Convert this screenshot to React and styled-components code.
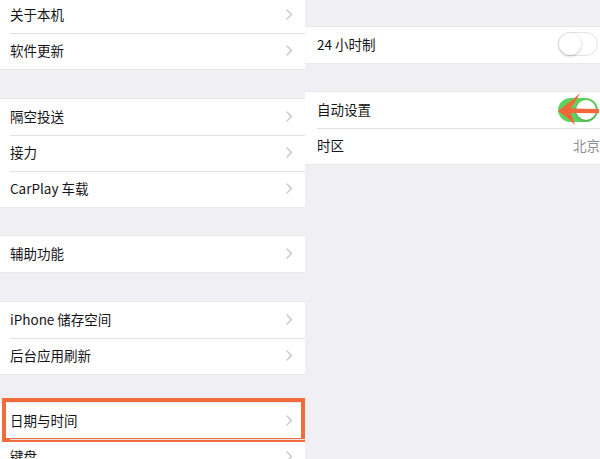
import React from "react";
import styled, { createGlobalStyle } from "styled-components";

const GlobalStyle = createGlobalStyle`
  html, body {
    margin: 0;
    padding: 0;
    background: #efeff4;
    overflow: hidden;
  }
  body {
    font-family: "Noto Sans CJK SC", "Noto Sans", sans-serif;
    -webkit-font-smoothing: antialiased;
  }
`;

const leftGroups = [
  { gap: -3, items: ["关于本机", "软件更新"] },
  { gap: 30, items: ["隔空投送", "接力", "CarPlay 车载"] },
  { gap: 29, items: ["辅助功能"] },
  { gap: 30, items: ["iPhone 储存空间", "后台应用刷新"] },
  { gap: 29, items: ["日期与时间", "键盘"], highlight: "日期与时间" },
];

function Chevron() {
  return (
    <svg width="7" height="11" viewBox="0 0 7 11">
      <path
        d="M1 1l4.5 4.5L1 10"
        fill="none"
        stroke="#c4c4c9"
        strokeWidth="1.3"
        strokeLinecap="round"
        strokeLinejoin="round"
      />
    </svg>
  );
}

function Toggle({ on }) {
  return (
    <Track $on={on}>
      <Knob $on={on} />
    </Track>
  );
}

export default function App() {
  return (
    <Page>
      <GlobalStyle />
      <LeftPane>
        {leftGroups.map((g, gi) => (
          <Group key={gi} $gap={g.gap}>
            {g.items.map((label) => (
              <Row key={label} $indent={10}>
                <Label>{label}</Label>
                <Chevron />
                {g.highlight === label && <Highlight />}
              </Row>
            ))}
          </Group>
        ))}
      </LeftPane>
      <RightPane>
        <Group $gap={27}>
          <Row $indent={12} $side>
            <Label>24 小时制</Label>
            <Toggle on={false} />
          </Row>
        </Group>
        <Group $gap={29}>
          <Row $indent={12} $side>
            <Label>自动设置</Label>
            <ToggleWrap>
              <Toggle on />
              <Arrow width="46" height="36" viewBox="0 0 46 36">
                <path
                  d="M3 19 C11 13 19 7 25 1 C22 7 19 12 15.5 16.6 L44 17 L44 21.2 L15.5 21 C17.5 25 19 29 20 33 C15 28 9 23 3 19 Z"
                  fill="#f2683a"
                />
              </Arrow>
            </ToggleWrap>
          </Row>
          <Row $indent={12} $side>
            <Label>时区</Label>
            <Value>北京</Value>
          </Row>
        </Group>
      </RightPane>
    </Page>
  );
}

const Page = styled.div`
  display: flex;
  width: 600px;
  height: 459px;
  overflow: hidden;
  background: #efeff4;
`;

const LeftPane = styled.div`
  width: 305px;
  flex-shrink: 0;
  display: flex;
  flex-direction: column;
`;

const RightPane = styled.div`
  flex: 1;
  display: flex;
  flex-direction: column;
`;

const Group = styled.div`
  margin-top: ${(p) => p.$gap}px;
  background: #fff;
  box-shadow: 0 -1px 0 #e8e8ec, 0 1px 0 #e8e8ec;
`;

const Row = styled.div`
  position: relative;
  box-sizing: border-box;
  height: 36px;
  display: flex;
  align-items: center;
  justify-content: space-between;
  padding: 0 ${(p) => (p.$side ? 2 : 12)}px 2px ${(p) => p.$indent}px;
  & + &::before {
    content: "";
    position: absolute;
    top: 0;
    left: ${(p) => p.$indent}px;
    right: 0;
    height: 1px;
    background: #e2e2e6;
  }
`;

const Label = styled.span`
  font-size: 13.5px;
  color: #141418;
`;

const Value = styled.span`
  font-size: 13.5px;
  color: #8e8e93;
  margin-right: -2px;
`;

const Highlight = styled.div`
  position: absolute;
  left: 2px;
  right: 0;
  top: -5px;
  bottom: -3px;
  border: 4px solid #f26b3a;
  pointer-events: none;
`;

const Track = styled.div`
  position: relative;
  width: 40px;
  height: 24px;
  border-radius: 12px;
  box-sizing: border-box;
  background: ${(p) => (p.$on ? "#5ed35e" : "#fff")};
  border: 1px solid ${(p) => (p.$on ? "#5ed35e" : "#e3e3e6")};
`;

const Knob = styled.div`
  position: absolute;
  top: ${(p) => (p.$on ? "1px" : "0")};
  left: ${(p) => (p.$on ? "17px" : "0")};
  width: ${(p) => (p.$on ? "20px" : "22px")};
  height: ${(p) => (p.$on ? "20px" : "22px")};
  border-radius: 50%;
  background: #fff;
  box-shadow: 0 1px 3px rgba(0, 0, 0, 0.25);
`;

const ToggleWrap = styled.div`
  position: relative;
  margin-top: 2px;
`;

const Arrow = styled.svg`
  position: absolute;
  left: -3px;
  top: -6px;
`;
